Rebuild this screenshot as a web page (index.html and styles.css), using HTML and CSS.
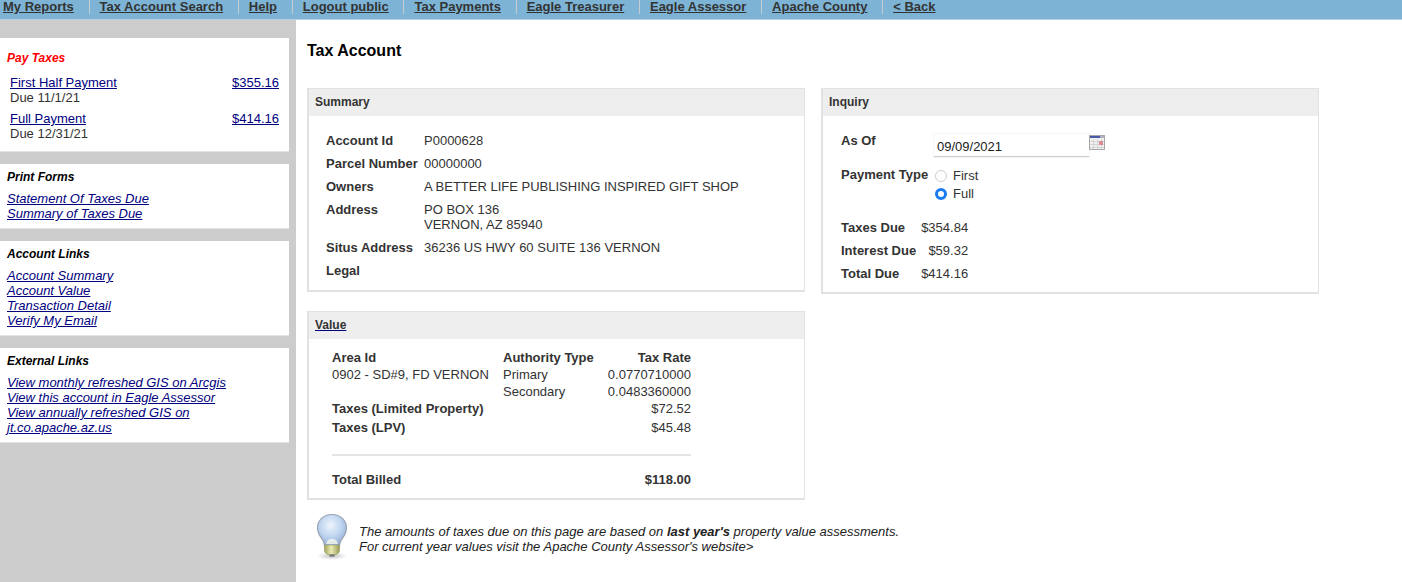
FILE: index.html
```html
<!DOCTYPE html>
<html lang="en">
<head>
<meta charset="utf-8">
<title>Tax Account</title>
<link rel="stylesheet" href="styles.css">
</head>
<body>
<nav class="topnav">
  <a href="#">My Reports</a>
  <a href="#">Tax Account Search</a>
  <a href="#">Help</a>
  <a href="#">Logout public</a>
  <a href="#">Tax Payments</a>
  <a href="#">Eagle Treasurer</a>
  <a href="#">Eagle Assessor</a>
  <a href="#">Apache County</a>
  <a href="#">&lt; Back</a>
</nav>
<div class="layout">
  <aside class="sidebar">
    <section class="side-card pay-card">
      <h3 class="side-title red">Pay Taxes</h3>
      <div class="pay-row">
        <div><a href="#">First Half Payment</a><br>Due 11/1/21</div>
        <a href="#">$355.16</a>
      </div>
      <div class="pay-row">
        <div><a href="#">Full Payment</a><br>Due 12/31/21</div>
        <a href="#">$414.16</a>
      </div>
    </section>
    <section class="side-card">
      <h3 class="side-title">Print Forms</h3>
      <ul class="side-links">
        <li><a href="#">Statement Of Taxes Due</a></li>
        <li><a href="#">Summary of Taxes Due</a></li>
      </ul>
    </section>
    <section class="side-card">
      <h3 class="side-title">Account Links</h3>
      <ul class="side-links">
        <li><a href="#">Account Summary</a></li>
        <li><a href="#">Account Value</a></li>
        <li><a href="#">Transaction Detail</a></li>
        <li><a href="#">Verify My Email</a></li>
      </ul>
    </section>
    <section class="side-card">
      <h3 class="side-title">External Links</h3>
      <ul class="side-links">
        <li><a href="#">View monthly refreshed GIS on Arcgis</a></li>
        <li><a href="#">View this account in Eagle Assessor</a></li>
        <li><a href="#">View annually refreshed GIS on jt.co.apache.az.us</a></li>
      </ul>
    </section>
  </aside>
  <main class="main">
    <h1 class="page-title">Tax Account</h1>
    <div class="panels">
      <div class="panel-col">
        <section class="panel">
          <header class="panel-head">Summary</header>
          <dl class="summary">
            <dt>Account Id</dt><dd>P0000628</dd>
            <dt>Parcel Number</dt><dd>00000000</dd>
            <dt>Owners</dt><dd>A BETTER LIFE PUBLISHING INSPIRED GIFT SHOP</dd>
            <dt>Address</dt><dd>PO BOX 136<br>VERNON, AZ 85940</dd>
            <dt>Situs Address</dt><dd>36236 US HWY 60 SUITE 136 VERNON</dd>
            <dt>Legal</dt><dd></dd>
          </dl>
        </section>
        <section class="panel">
          <header class="panel-head"><a class="head-link" href="#">Value</a></header>
          <div class="value-body">
            <div class="value-grid">
              <b>Area Id</b><b>Authority Type</b><b class="num">Tax Rate</b>
              <span>0902 - SD#9, FD VERNON</span><span>Primary</span><span class="num">0.0770710000</span>
              <span></span><span>Secondary</span><span class="num">0.0483360000</span>
              <b class="wide">Taxes (Limited Property)</b><span class="num">$72.52</span>
              <b class="wide tall">Taxes (LPV)</b><span class="num tall">$45.48</span>
            </div>
            <hr class="rule">
            <div class="total-row"><b>Total Billed</b><b>$118.00</b></div>
          </div>
        </section>
      </div>
      <section class="panel inquiry">
        <header class="panel-head">Inquiry</header>
        <div class="inquiry-body">
          <div class="asof">
            <b class="inq-label">As Of</b>
            <span class="date-input">09/09/2021</span>
            <svg class="cal" width="16" height="15" viewBox="0 0 16 15" aria-hidden="true">
              <rect x="0.5" y="0.5" width="15" height="14" fill="#f1f1f1" stroke="#a8a8a8"/>
              <rect x="1" y="1" width="10" height="2" fill="#4a5aa8"/>
              <rect x="11" y="1" width="4" height="2" fill="#b0b0c0"/>
              <path d="M1 6.500h14M1 9.500h14M1 12.500h14M4.500 4v10M8.500 4v10M12.500 4v10" stroke="#d4d4d4" stroke-width="1" fill="none"/>
              <rect x="10" y="6" width="4" height="4" fill="#d98a94"/>
            </svg>
          </div>
          <div class="paytype">
            <b class="inq-label">Payment Type</b>
            <div class="radios">
              <label class="radio"><span class="dot"></span>First</label>
              <label class="radio"><span class="dot on"></span>Full</label>
            </div>
          </div>
          <div class="dues">
            <b>Taxes Due</b><span class="num">$354.84</span>
            <b>Interest Due</b><span class="num">$59.32</span>
            <b>Total Due</b><span class="num">$414.16</span>
          </div>
        </div>
      </section>
    </div>
    <div class="note">
      <svg class="bulb" width="36" height="48" viewBox="0 0 36 48" aria-hidden="true">
        <defs>
          <radialGradient id="glass" cx="0.45" cy="0.35" r="0.7">
            <stop offset="0" stop-color="#eef4fc"/>
            <stop offset="0.55" stop-color="#bdd4f0"/>
            <stop offset="1" stop-color="#8fa9cc"/>
          </radialGradient>
          <linearGradient id="base" x1="0" x2="1" y1="0" y2="0">
            <stop offset="0" stop-color="#a3a35c"/>
            <stop offset="0.45" stop-color="#ecebb4"/>
            <stop offset="1" stop-color="#98985a"/>
          </linearGradient>
          <radialGradient id="shade" cx="0.5" cy="0.5" r="0.5">
            <stop offset="0" stop-color="#999" stop-opacity="0.6"/>
            <stop offset="1" stop-color="#999" stop-opacity="0"/>
          </radialGradient>
        </defs>
        <ellipse cx="18" cy="43" rx="15" ry="4" fill="url(#shade)"/>
        <path d="M18 1.500C9.500 1.500 3.500 7.500 3.500 15c0 6 3.500 9 5.500 12.500 1 2 1 3 1.500 5h15c.5-2 .5-3 1.500-5 2-3.500 5.500-6.500 5.500-12.500C32.500 7.500 26.500 1.500 18 1.500z" fill="url(#glass)" stroke="#9aa3b2" stroke-width="1.200"/>
        <path d="M12 31c1-3 2-5 6-5s5 2 6 5" fill="#f4f6ee" opacity="0.8"/>
        <path d="M10.500 32h15v6c0 1.500-2 3-3.500 3.500h-8c-1.500-.5-3.500-2-3.500-3.500z" fill="url(#base)" stroke="#8a8a4c" stroke-width="0.500"/>
        <ellipse cx="18" cy="42.500" rx="3" ry="1.300" fill="#777"/>
      </svg>
      <p class="note-text">The amounts of taxes due on this page are based on <b>last year's</b> property value assessments.<br>For current year values visit the Apache County Assessor's website&gt;</p>
    </div>
  </main>
</div>
</body>
</html>
```
FILE: styles.css
```css
* { box-sizing: border-box; }
html, body { margin: 0; padding: 0; }
body {
  font-family: "Liberation Sans", Arial, sans-serif;
  font-size: 13px;
  line-height: 15px;
  color: #333;
  background: #fff;
  height: 582px;
  overflow: hidden;
}
.topnav {
  display: flex;
  align-items: flex-start;
  height: 20px;
  background: #7db4d5;
  border-bottom: 1px solid #b5cfdd;
  padding-left: 3px;
}
.topnav a {
  color: #333;
  font-weight: bold;
  line-height: 14px;
  margin-right: 10px;
  padding-right: 14.750px;
  border-right: 1px solid #c4ccd0;
  height: 14px;
}
.topnav a:last-child { border-right: 0; }
.layout { display: flex; height: 562px; }
.sidebar {
  width: 296px;
  flex: none;
  background: #ccc;
  padding: 18px 7px 0 0;
  display: flex;
  flex-direction: column;
  gap: 12px;
}
.side-card {
  background: #fff;
  border-bottom: 1px solid #e4e4e4;
  padding: 6px 7px 7px;
}
.side-title {
  margin: 0 0 6px;
  font-size: 12px;
  font-weight: bold;
  font-style: italic;
  color: #000;
  line-height: 15px;
}
.side-title.red { color: #f00; }
.pay-card { padding: 13px 10px 10px 7px; }
.pay-card .side-title { margin-bottom: 9px; }
.pay-row {
  display: flex;
  justify-content: space-between;
  padding-left: 3px;
  margin-bottom: 6px;
}
.pay-row:last-child { margin-bottom: 0; }
a { color: #000080; text-decoration: underline; }
.side-links { list-style: none; margin: 0; padding: 0; font-style: italic; }
.main { flex: 1; padding: 0 0 0 11px; min-width: 0; }
.page-title {
  margin: 22px 0 28px;
  font-size: 16px;
  line-height: 18px;
  font-weight: bold;
  color: #000;
}
.panels { display: flex; align-items: flex-start; gap: 16px; }
.panel-col { display: flex; flex-direction: column; gap: 19px; width: 498px; }
.panel { border: 2px solid #e2e2e2; border-width: 1px 1px 2px 2px; background: #fff; width: 498px; }
.panel-head {
  height: 27px;
  background: #eee;
  padding: 6px 6px 0 6px;
  font-weight: bold;
  font-size: 12px;
  color: #333;
}
.head-link { color: #333; text-decoration-color: #000080; }
.summary {
  display: grid;
  grid-template-columns: 98px 1fr;
  row-gap: 8px;
  margin: 0;
  padding: 17px 17px 12px;
}
.summary dt { font-weight: bold; }
.summary dd { margin: 0; min-height: 15px; }
.value-body { padding: 11px 113px 11px 23px; }
.value-grid {
  display: grid;
  grid-template-columns: 171px 1fr auto;
  row-gap: 2px;
}
.wide { grid-column: 1 / 3; }
.tall { margin-top: 2px; }
.num { text-align: right; }
.rule { border: 0; height: 2px; background: #e4e4e4; margin: 19px 0 16px; }
.total-row { display: flex; justify-content: space-between; }
.inquiry-body { padding: 17px 17px 11px 18px; }
.asof { display: flex; align-items: flex-start; }
.inq-label { width: 93px; flex: none; }
.date-input {
  width: 155px;
  height: 23px;
  margin-top: 1px;
  border-bottom: 1px solid #ccc;
  box-shadow: 0 0 0 1px #f6f6f6;
  padding: 5px 3px 0;
  color: #222;
}
.cal { margin-top: 2px; flex: none; }
.paytype { display: flex; align-items: flex-start; margin-top: 10px; }
.radios { display: flex; flex-direction: column; gap: 3px; margin-top: 1px; margin-left: 1px; }
.radio { display: flex; align-items: center; gap: 6px; }
.dot {
  width: 12px;
  height: 12px;
  border-radius: 50%;
  border: 1px solid #ccc;
  background: #fff;
}
.dot.on { border: 3.500px solid #1a7cf0; }
.dues {
  display: grid;
  grid-template-columns: max-content max-content;
  column-gap: 5px;
  row-gap: 8px;
  margin-top: 19px;
}
.note { display: flex; align-items: flex-start; margin-top: 13px; padding-left: 7px; }
.bulb { flex: none; }
.note-text { margin: 11px 0 0 9px; font-style: italic; color: #222; }
.note-text b { color: #222; }
```
